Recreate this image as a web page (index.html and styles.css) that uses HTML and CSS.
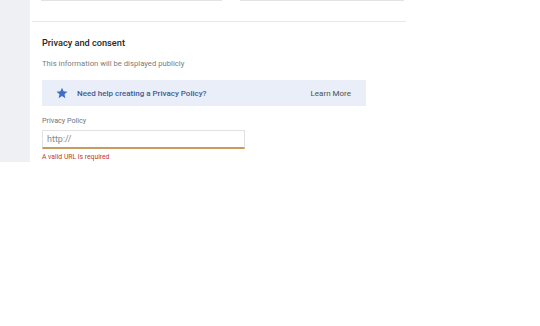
FILE: index.html
```html
<!DOCTYPE html>
<html>
<head>
<meta charset="utf-8">
<link rel="stylesheet" href="styles.css">
</head>
<body>
<div class="layout">
  <aside class="sidebar"></aside>
  <main class="main">
    <div class="top-fields">
      <div class="top-box top-box-a"></div>
      <div class="top-box top-box-b"></div>
    </div>
    <hr class="divider">
    <section class="section">
      <h2 class="section-title">Privacy and consent</h2>
      <p class="section-desc">This information will be displayed publicly</p>
      <div class="banner">
        <svg class="star" width="12" height="12" viewBox="0 0 24 24"><path fill="#3d6ec8" d="M12 1.5l3.1 7.2 7.8.7-5.9 5.2 1.8 7.7L12 18.2l-6.8 4.1 1.8-7.7-5.9-5.2 7.8-.7z"/></svg>
        <span class="banner-text">Need help creating a Privacy Policy?</span>
        <span class="banner-link">Learn More</span>
      </div>
      <label class="field-label">Privacy Policy</label>
      <div class="input">http://</div>
      <div class="error">A valid URL is required</div>
    </section>
  </main>
</div>
</body>
</html>
```
FILE: styles.css
```css
html, body {
  margin: 0;
  padding: 0;
  background: #fff;
  font-family: Roboto, "Liberation Sans", sans-serif;
}
.layout {
  display: flex;
  align-items: flex-start;
}
.sidebar {
  width: 29px;
  height: 162px;
  background: #eef0f3;
  border-right: 1px solid #f1f2f4;
  flex: none;
}
.main {
  width: 374px;
  padding-left: 2px;
}
.top-fields {
  display: flex;
  gap: 18px;
  padding-left: 9px;
}
.top-box {
  height: 0;
  border-bottom: 1px solid #e3e3e3;
}
.top-box-a { width: 181px; }
.top-box-b { width: 164px; }
.divider {
  margin: 20px 0 0 0;
  border: 0;
  border-top: 1px solid #e6e7ea;
}
.section {
  padding-left: 10px;
}
.section-title {
  margin: 15px 0 0 0;
  font-size: 9.2px;
  font-weight: 500;
  color: #262626;
  line-height: 12px;
}
.section-desc {
  margin: 10px 0 0 0;
  font-size: 7.7px;
  color: #7d7d7d;
  line-height: 10px;
}
.banner {
  margin-top: 11px;
  width: 324px;
  height: 26px;
  background: #e9eef8;
  display: flex;
  align-items: center;
  box-sizing: border-box;
  padding-left: 14px;
  padding-right: 15px;
}
.star { flex: none; }
.banner-text {
  margin-left: 9px;
  font-size: 8px;
  font-weight: 500;
  color: #3e5a94;
}
.banner-link {
  margin-left: auto;
  font-size: 8px;
  font-weight: 400;
  color: #505050;
}
.field-label {
  display: block;
  margin-top: 10px;
  font-size: 7.2px;
  color: #737373;
  line-height: 10px;
}
.input {
  margin-top: 4px;
  width: 203px;
  height: 19px;
  box-sizing: border-box;
  border: 1px solid #e2e2e2;
  border-bottom: 2px solid #c99a5c;
  font-size: 9px;
  color: #8a8a8a;
  padding-left: 4px;
  line-height: 16px;
}
.error {
  margin-top: 4px;
  font-size: 6.8px;
  color: #c0392b;
  line-height: 9px;
}
```
